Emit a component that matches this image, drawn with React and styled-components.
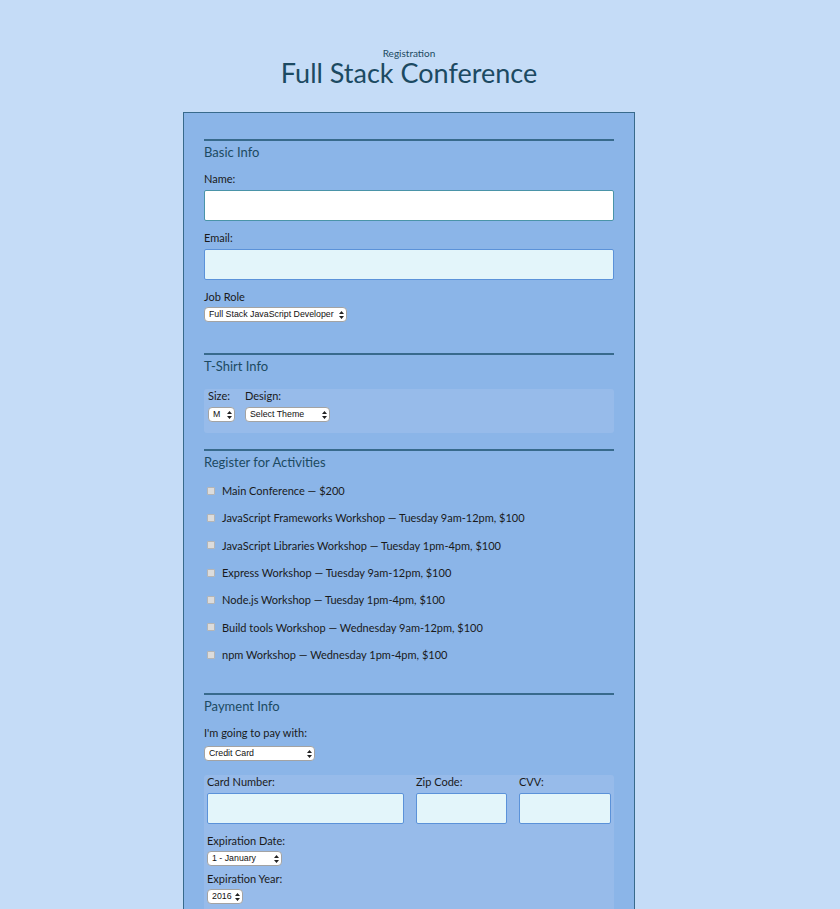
import styled, { createGlobalStyle } from 'styled-components';

// Colours picked from the reference
const colors = {
    page: '#c5dcf7',
    panel: '#8bb5e8',
    box: '#97bbea',
    line: '#386a8c',
    heading: '#1c4a62',
    text: '#1a1a1a',
    field: '#e3f5fa',
    fieldBorder: '#5b92d9',
    focusBorder: '#4a94a8',
};

const GlobalStyle = createGlobalStyle`
    body {
        margin: 0;
        background: ${colors.page};
        font-family: 'Lato', 'Noto Sans', sans-serif;
        color: ${colors.text};
    }
`;

const Page = styled.div`
    display: flex;
    flex-direction: column;
    align-items: center;
    padding: 48px 22px 40px 0;
`;

const Header = styled.header`
    text-align: center;
    color: ${colors.heading};
    margin-bottom: 26px;
`;

const Kicker = styled.div`
    font-size: 10px;
    line-height: 11px;
`;

const Title = styled.h1`
    margin: 0;
    font-size: 27px;
    line-height: 27px;
    font-weight: 400;
`;

const Form = styled.form`
    width: 410px;
    padding: 26px 20px 30px;
    background: ${colors.panel};
    border: 1px solid ${colors.line};
`;

const Section = styled.section`
    border-top: 2px solid ${colors.line};
    padding-top: 3px;
    margin-bottom: ${p => p.$after || 0}px;
`;

const Heading = styled.h2`
    margin: 0 0 ${p => p.$gap || 12}px;
    font-size: 13px;
    line-height: 16px;
    font-weight: 400;
    color: ${colors.heading};
`;

const Label = styled.label`
    display: block;
    font-size: 11px;
    line-height: 14px;
    margin-bottom: ${p => p.$gap ?? 4}px;
`;

const TextInput = styled.input`
    display: block;
    box-sizing: border-box;
    width: 100%;
    height: 31px;
    margin: 0 0 10px;
    background: ${p => (p.$focus ? '#fff' : colors.field)};
    border: 1px solid ${p => (p.$focus ? colors.focusBorder : colors.fieldBorder)};
    border-radius: 2px;
    outline: none;
`;

const SelectWrap = styled.div`
    position: relative;
    width: ${p => p.$w}px;
    height: 15px;
    margin-bottom: ${p => p.$after || 0}px;
`;

const Select = styled.select`
    display: block;
    appearance: none;
    box-sizing: border-box;
    width: 100%;
    height: 15px;
    margin: 0;
    padding: 0 9px 0 4px;
    background: #fff;
    border: 1px solid #a3a3a3;
    border-radius: 4px;
    font-family: 'Liberation Sans', Arial, sans-serif;
    font-size: 8.8px;
    line-height: 13px;
    color: #111;
    outline: none;
`;

const Arrows = styled.svg`
    position: absolute;
    right: 3px;
    top: 4px;
    pointer-events: none;
`;

const Box = styled.div`
    background: ${colors.box};
    border-radius: 3px;
    padding: ${p => p.$pad || '0 3px 11px'};
`;

const Row = styled.div`
    display: flex;
    gap: 10px;
`;

const Cell = styled.div`
    display: flex;
    flex-direction: column;
`;

const Activity = styled.label`
    display: flex;
    align-items: center;
    height: 27.33px;
    padding-left: 3px;
    font-size: 11px;
`;

const Check = styled.input`
    appearance: none;
    width: 8px;
    height: 8px;
    margin: 0 7px 0 0;
    background: #dcdcdc;
    border: 1px solid #b5b5b5;
    border-radius: 1px;
`;

const CardGrid = styled.div`
    display: grid;
    grid-template-columns: 197fr 91fr 92fr;
    column-gap: 12px;
`;

const Button = styled.button`
    margin-top: 20px;
    padding: 8px 16px;
    font-family: inherit;
    font-size: 13px;
    color: #fff;
    background: ${colors.line};
    border: none;
    border-radius: 4px;
`;

const Dropdown = ({ w, after, children }) => (
    <SelectWrap $w={w} $after={after}>
        <Select>{children}</Select>
        <Arrows width="5" height="8" viewBox="0 0 5 8">
            <path d="M2.5 0 L5 3 H0 Z M2.5 8 L5 5 H0 Z" fill="#222" />
        </Arrows>
    </SelectWrap>
);

const activities = [
    'Main Conference — $200',
    'JavaScript Frameworks Workshop — Tuesday 9am-12pm, $100',
    'JavaScript Libraries Workshop — Tuesday 1pm-4pm, $100',
    'Express Workshop — Tuesday 9am-12pm, $100',
    'Node.js Workshop — Tuesday 1pm-4pm, $100',
    'Build tools Workshop — Wednesday 9am-12pm, $100',
    'npm Workshop — Wednesday 1pm-4pm, $100',
];

const App = () => {
    return (
        <>
            <GlobalStyle />
            <Page>
                <Header>
                    <Kicker>Registration</Kicker>
                    <Title>Full Stack Conference</Title>
                </Header>
                <Form onSubmit={e => e.preventDefault()}>
                    <Section $after={31}>
                        <Heading>Basic Info</Heading>
                        <Label>Name:</Label>
                        <TextInput type="text" $focus />
                        <Label>Email:</Label>
                        <TextInput type="email" />
                        <Label $gap={3}>Job Role</Label>
                        <Dropdown w={143}>
                            <option>Full Stack JavaScript Developer</option>
                        </Dropdown>
                    </Section>

                    <Section $after={16}>
                        <Heading $gap={15}>T-Shirt Info</Heading>
                        <Box $pad="0 4px 11px">
                            <Row>
                                <Cell>
                                    <Label $gap={4}>Size:</Label>
                                    <Dropdown w={27}>
                                        <option>M</option>
                                    </Dropdown>
                                </Cell>
                                <Cell>
                                    <Label $gap={4}>Design:</Label>
                                    <Dropdown w={85}>
                                        <option>Select Theme</option>
                                    </Dropdown>
                                </Cell>
                            </Row>
                        </Box>
                    </Section>

                    <Section $after={25}>
                        <Heading $gap={7}>Register for Activities</Heading>
                        {activities.map(a => (
                            <Activity key={a}>
                                <Check type="checkbox" />
                                {a}
                            </Activity>
                        ))}
                    </Section>

                    <Section>
                        <Heading>Payment Info</Heading>
                        <Label $gap={6}>I'm going to pay with:</Label>
                        <Dropdown w={111} after={14}>
                            <option>Credit Card</option>
                        </Dropdown>
                        <Box>
                            <CardGrid>
                                <Cell>
                                    <Label>Card Number:</Label>
                                    <TextInput type="text" />
                                </Cell>
                                <Cell>
                                    <Label>Zip Code:</Label>
                                    <TextInput type="text" />
                                </Cell>
                                <Cell>
                                    <Label>CVV:</Label>
                                    <TextInput type="text" />
                                </Cell>
                            </CardGrid>
                            <Label $gap={3}>Expiration Date:</Label>
                            <Dropdown w={75} after={6}>
                                <option>1 - January</option>
                            </Dropdown>
                            <Label $gap={3}>Expiration Year:</Label>
                            <Dropdown w={36}>
                                <option>2016</option>
                            </Dropdown>
                        </Box>
                    </Section>
                    <Button type="submit">Register</Button>
                </Form>
            </Page>
        </>
    );
};

export default App;
